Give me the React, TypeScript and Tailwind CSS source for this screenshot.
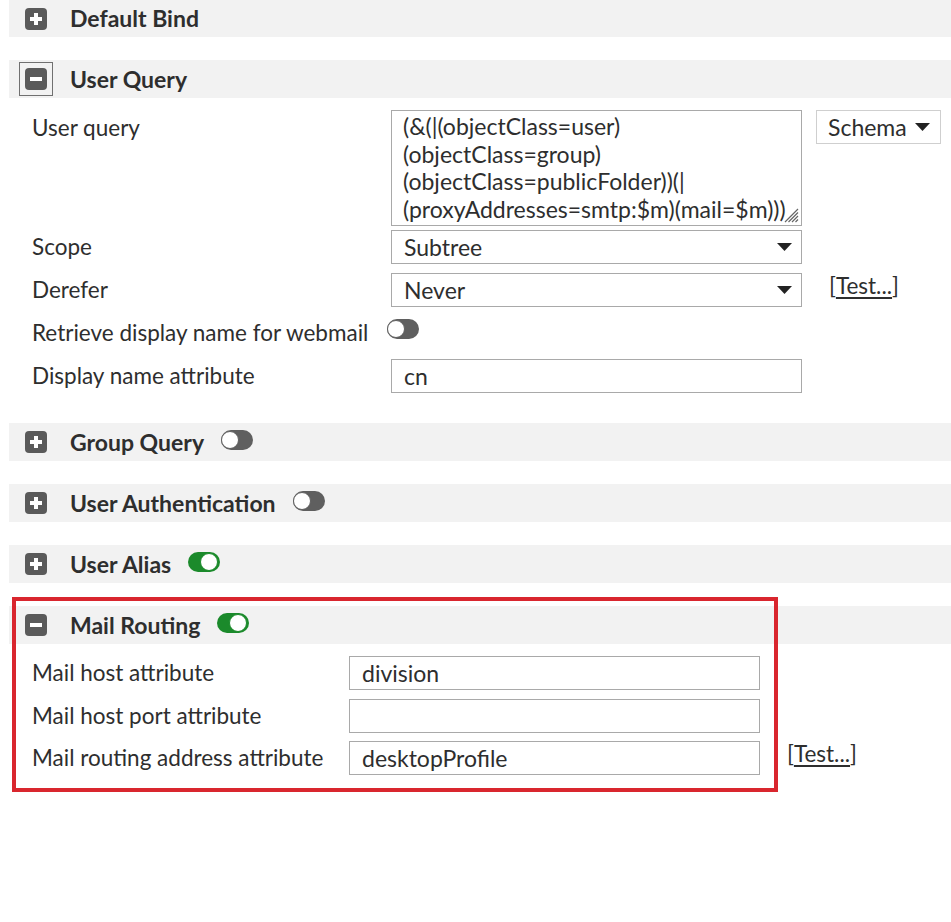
import React from "react";

function PlusIcon({ minus = false, focused = false }: { minus?: boolean; focused?: boolean }) {
  return (
    <div className="relative w-[22px] h-[22px] rounded-[4px] bg-[#5a5a5a] flex items-center justify-center shrink-0">
      {focused && (
        <div className="absolute -left-[6px] -top-[6px] w-[34px] h-[34px] border border-[#707070]" />
      )}
      <svg width="14" height="14" viewBox="0 0 14 14">
        <rect x="1" y="5" width="12" height="4" fill="#fff" />
        {!minus && <rect x="5" y="1" width="4" height="12" fill="#fff" />}
      </svg>
    </div>
  );
}

function Toggle({ on = false }: { on?: boolean }) {
  return (
    <div
      className={
        "relative w-[32px] h-[20px] rounded-full shrink-0 " + (on ? "bg-[#1b8a2b]" : "bg-[#5f5f5f]")
      }
    >
      <div
        className={
          "absolute top-[1px] w-[18px] h-[18px] rounded-full bg-white border-[1.5px] " +
          (on ? "right-[2px] border-[#1b8a2b]" : "left-[0px] border-[#5f5f5f]")
        }
      />
    </div>
  );
}

function Header({
  title,
  minus = false,
  focused = false,
  toggle,
  first = false,
}: {
  title: string;
  minus?: boolean;
  focused?: boolean;
  toggle?: "on" | "off";
  first?: boolean;
}) {
  return (
    <div className={"flex items-center bg-[#f2f2f2] pl-[16px] " + (first ? "h-[37px]" : "h-[38px]")}>
      <PlusIcon minus={minus} focused={focused} />
      <span className="ml-[23px] text-[23px] font-bold text-[#2e2e2e] leading-none">{title}</span>
      {toggle && (
        <div className="ml-[17px] -mt-[4px]">
          <Toggle on={toggle === "on"} />
        </div>
      )}
    </div>
  );
}

function Caret() {
  return (
    <svg width="15" height="8" viewBox="0 0 15 8" className="shrink-0">
      <path d="M0 0 H15 L7.5 8 Z" fill="#222" />
    </svg>
  );
}

function Select({ value }: { value: string }) {
  return (
    <div className="w-[411px] h-[34px] border border-[#a9a9a9] bg-white flex items-center justify-between pl-[12px] pr-[9px] text-[23px]">
      <span>{value}</span>
      <Caret />
    </div>
  );
}

function Input({ value }: { value: string }) {
  return (
    <div className="w-[411px] h-[34px] border border-[#a9a9a9] bg-white flex items-center pl-[12px] text-[23px]">
      <span>{value}</span>
    </div>
  );
}

function TestLink() {
  return (
    <span className="text-[22.5px] text-[#2e2e2e]">
      [<span className="underline underline-offset-[3px]">Test...</span>]
    </span>
  );
}

export default function App() {
  const queryLines = [
    "(&(|(objectClass=user)",
    "(objectClass=group)",
    "(objectClass=publicFolder))(|",
    "(proxyAddresses=smtp:$m)(mail=$m)))",
  ];
  return (
    <div
      className="relative w-[951px] h-[922px] bg-white pl-[9px] text-[#2e2e2e]"
      style={{ fontFamily: "Lato, 'Open Sans', sans-serif" }}
    >
      <Header title="Default Bind" first />

      <div className="mt-[23px]">
        <Header title="User Query" minus focused />
      </div>

      <div className="pl-[23px] pt-[12px]">
        {/* User query row */}
        <div className="flex items-start">
          <div className="w-[359px] text-[22.5px] leading-[27px] pt-[4px]">User query</div>
          <div className="relative w-[411px] h-[116px] border border-[#a9a9a9] bg-white pl-[11px] pt-[2px] text-[23px] leading-[27.5px] whitespace-nowrap overflow-hidden">
            {queryLines.map((l) => (
              <div key={l}>{l}</div>
            ))}
            <svg width="16" height="16" viewBox="0 0 16 16" className="absolute right-[2px] bottom-[2px]">
              <path
                d="M15 2 L2 15 M15 5.5 L5.5 15 M15 9 L9 15 M15 12.5 L12.5 15"
                stroke="#666"
                strokeWidth="1.2"
              />
            </svg>
          </div>
          <div className="ml-[14px] w-[125px] h-[34px] border border-[#cfcfcf] bg-white flex items-center justify-between pl-[11px] pr-[10px] text-[23px]">
            <span>Schema</span>
            <Caret />
          </div>
        </div>

        {/* Scope */}
        <div className="flex items-center mt-[4px]">
          <div className="w-[359px] text-[22.5px]">Scope</div>
          <Select value="Subtree" />
        </div>

        {/* Derefer */}
        <div className="flex items-center mt-[9px]">
          <div className="w-[359px] text-[22.5px]">Derefer</div>
          <Select value="Never" />
          <div className="ml-[27px] -mt-[8px]">
            <TestLink />
          </div>
        </div>

        {/* Retrieve display name */}
        <div className="flex items-center mt-[9px] h-[34px]">
          <div className="w-[355px] text-[22.5px] whitespace-nowrap">Retrieve display name for webmail</div>
          <div className="-mt-[8px]">
            <Toggle />
          </div>
        </div>

        {/* Display name attribute */}
        <div className="flex items-center mt-[9px]">
          <div className="w-[359px] text-[22.5px]">Display name attribute</div>
          <Input value="cn" />
        </div>
      </div>

      <div className="mt-[30px]">
        <Header title="Group Query" toggle="off" />
      </div>
      <div className="mt-[23px]">
        <Header title="User Authentication" toggle="off" />
      </div>
      <div className="mt-[23px]">
        <Header title="User Alias" toggle="on" />
      </div>
      <div className="mt-[23px]">
        <Header title="Mail Routing" minus toggle="on" />
      </div>

      <div className="pl-[23px] pt-[12px]">
        <div className="flex items-center">
          <div className="w-[317px] text-[22.5px]">Mail host attribute</div>
          <Input value="division" />
        </div>
        <div className="flex items-center mt-[9px]">
          <div className="w-[317px] text-[22.5px]">Mail host port attribute</div>
          <Input value="" />
        </div>
        <div className="flex items-center mt-[8px]">
          <div className="w-[317px] text-[22.5px] whitespace-nowrap">Mail routing address attribute</div>
          <Input value="desktopProfile" />
          <div className="ml-[27px] -mt-[8px]">
            <TestLink />
          </div>
        </div>
      </div>

      {/* annotation box */}
      <div className="absolute left-[12px] top-[597px] w-[766px] h-[195px] border-[4px] border-[#d9262e] pointer-events-none" />
    </div>
  );
}
